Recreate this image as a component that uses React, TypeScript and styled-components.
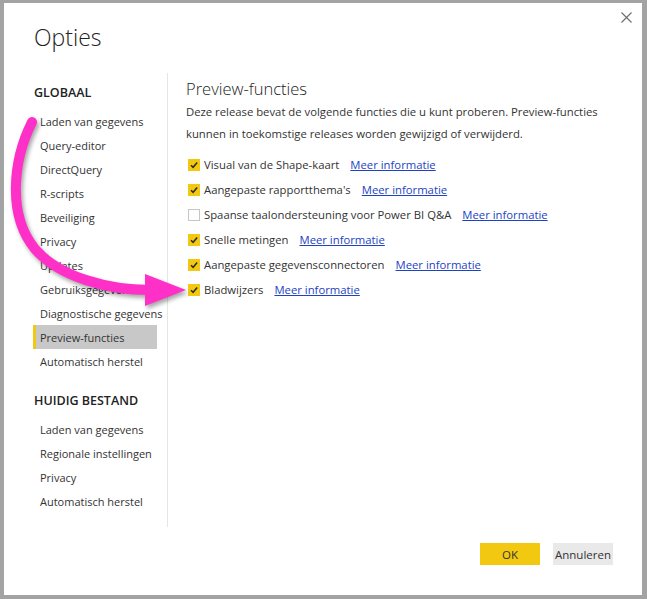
import React from "react"
import styled, { createGlobalStyle } from "styled-components"

const GlobalStyle = createGlobalStyle`
  html, body {
    margin: 0;
    padding: 0;
  }
  body {
    background: #a3a3a3;
    font-family: "Segoe UI", "Open Sans", sans-serif;
    color: #333;
  }
`

const yellow = "#f2c811"

const Frame = styled.div`
  box-sizing: border-box;
  height: 599px;
  padding: 3px 5px 4px 4px;
  position: relative;
`

const Dialog = styled.div`
  position: relative;
  display: flex;
  flex-direction: column;
  height: 100%;
  background: #fff;
`

const Header = styled.header`
  padding: 18px 0 0 30px;
`

const Title = styled.h1`
  margin: 0;
  font-size: 23px;
  line-height: 32px;
  font-weight: 300;
  color: #222;
`

const CloseButton = styled.button`
  position: absolute;
  top: 8px;
  right: 9px;
  width: 13px;
  height: 13px;
  padding: 0;
  border: none;
  background: none;
  display: flex;
  align-items: center;
  justify-content: center;
`

const Body = styled.div`
  display: flex;
  height: 454px;
  margin-top: 20px;
`

const Sidebar = styled.nav`
  box-sizing: border-box;
  width: 163px;
  padding-left: 29px;
`

const SectionTitle = styled.div<{ $spaced?: boolean }>`
  margin-top: ${p => (p.$spaced ? "18px" : "10px")};
  margin-bottom: 6px;
  padding-left: 1px;
  font-size: 12.5px;
  line-height: 20px;
  font-weight: 600;
  color: #222;
`

const NavItem = styled.div<{ $active?: boolean }>`
  box-sizing: border-box;
  width: 124px;
  height: 24px;
  line-height: 25px;
  font-size: 11px;
  white-space: nowrap;
  color: #333;
  padding-left: ${p => (p.$active ? "4px" : "7px")};
  border-left: ${p => (p.$active ? `3px solid ${yellow}` : "none")};
  background: ${p => (p.$active ? "#c8c8c8" : "transparent")};
`

const Content = styled.section`
  flex: 1;
  border-left: 1px solid #e6e6e6;
  padding-left: 18px;
`

const Heading = styled.h2`
  margin: 4px 0 0;
  font-size: 16.5px;
  line-height: 24px;
  font-weight: 300;
  color: #222;
`

const Intro = styled.p`
  margin: 0;
  font-size: 11.3px;
  line-height: 22px;
  color: #333;
`

const Features = styled.div`
  margin-top: 7px;
`

const FeatureRow = styled.div`
  display: flex;
  align-items: center;
  height: 25px;
  padding-left: 2px;
  font-size: 11.3px;
`

const Box = styled.span<{ $checked: boolean }>`
  box-sizing: border-box;
  width: 12px;
  height: 12px;
  display: flex;
  align-items: center;
  justify-content: center;
  background: ${p => (p.$checked ? yellow : "#fff")};
  border: ${p => (p.$checked ? "none" : "1px solid #c6c6c6")};
`

const Label = styled.span`
  margin-left: 4px;
  color: #333;
`

const MoreLink = styled.a`
  margin-left: 11px;
  color: #1d43c4;
  text-decoration: underline;
`

const Footer = styled.footer`
  display: flex;
  justify-content: flex-end;
  gap: 13px;
  margin-top: 16px;
  padding-right: 29px;
`

const Button = styled.button<{ $primary?: boolean }>`
  width: 60px;
  height: 22px;
  padding: 0;
  border: none;
  font-family: inherit;
  font-size: 11.5px;
  color: #333;
  background: ${p => (p.$primary ? yellow : "#e9e9e9")};
`

const Overlay = styled.svg`
  position: absolute;
  left: 0;
  top: 0;
  pointer-events: none;
  filter: drop-shadow(2px 3px 2px rgba(0, 0, 0, 0.35));
`

const globalItems = [
  "Laden van gegevens",
  "Query-editor",
  "DirectQuery",
  "R-scripts",
  "Beveiliging",
  "Privacy",
  "Updates",
  "Gebruiksgegevens",
  "Diagnostische gegevens",
  "Preview-functies",
  "Automatisch herstel",
]

const fileItems = [
  "Laden van gegevens",
  "Regionale instellingen",
  "Privacy",
  "Automatisch herstel",
]

const features = [
  { label: "Visual van de Shape-kaart", checked: true },
  { label: "Aangepaste rapportthema's", checked: true },
  { label: "Spaanse taalondersteuning voor Power BI Q&A", checked: false },
  { label: "Snelle metingen", checked: true },
  { label: "Aangepaste gegevensconnectoren", checked: true },
  { label: "Bladwijzers", checked: true },
]

const Check = () =>
  <svg width="10" height="10" viewBox="0 0 10 10">
    <polyline points="2,5.2 4.1,7.3 8.2,2.6" fill="none" stroke="#2b2b2b" strokeWidth="1.5" />
  </svg>

const CloseIcon = () =>
  <svg width="11" height="11" viewBox="0 0 11 11">
    <path d="M0.5 0.5 L10.5 10.5 M10.5 0.5 L0.5 10.5" stroke="#6b6b6b" strokeWidth="1.1" />
  </svg>

const Arrow = () =>
  <Overlay width="647" height="599" viewBox="0 0 647 599">
    <path
      d="M32 122 C13 160 7 215 35 249 C60 278 110 290 150 290"
      fill="none"
      stroke="#ff30c8"
      strokeWidth="10"
      strokeLinecap="round"
    />
    <polygon points="145,274 186,290 145,306" fill="#ff30c8" />
  </Overlay>

export default function App() {
  return (
    <>
      <GlobalStyle />
      <Frame>
        <Dialog>
          <Header>
            <Title>Opties</Title>
          </Header>
          <CloseButton aria-label="Sluiten"><CloseIcon /></CloseButton>

          <Body>
            <Sidebar>
              <SectionTitle>GLOBAAL</SectionTitle>
              {globalItems.map(item =>
                <NavItem key={item} $active={item === "Preview-functies"}>{item}</NavItem>
              )}
              <SectionTitle $spaced>HUIDIG BESTAND</SectionTitle>
              {fileItems.map(item =>
                <NavItem key={item}>{item}</NavItem>
              )}
            </Sidebar>

            <Content>
              <Heading>Preview-functies</Heading>
              <Intro>
                Deze release bevat de volgende functies die u kunt proberen. Preview-functies<br />
                kunnen in toekomstige releases worden gewijzigd of verwijderd.
              </Intro>
              <Features>
                {features.map(f =>
                  <FeatureRow key={f.label}>
                    <Box $checked={f.checked}>{f.checked && <Check />}</Box>
                    <Label>{f.label}</Label>
                    <MoreLink href="#">Meer informatie</MoreLink>
                  </FeatureRow>
                )}
              </Features>
            </Content>
          </Body>

          <Footer>
            <Button $primary>OK</Button>
            <Button>Annuleren</Button>
          </Footer>
        </Dialog>
        <Arrow />
      </Frame>
    </>
  )
}
